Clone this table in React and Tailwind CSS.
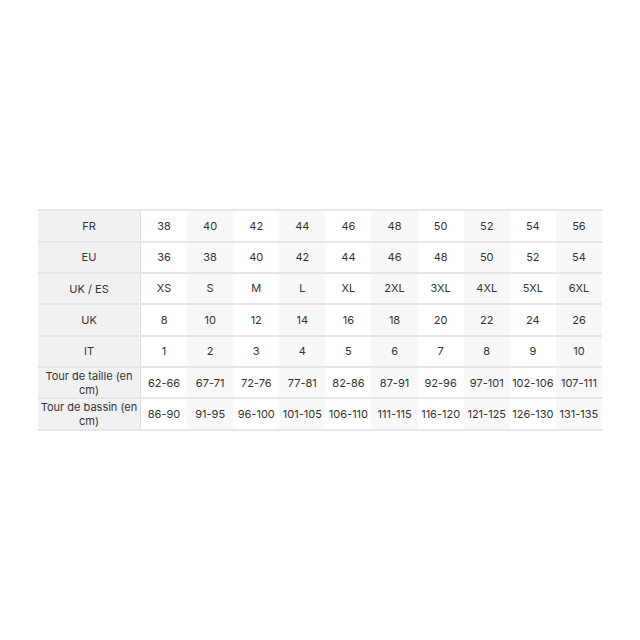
const rows = [
  ['FR', ['38', '40', '42', '44', '46', '48', '50', '52', '54', '56']],
  ['EU', ['36', '38', '40', '42', '44', '46', '48', '50', '52', '54']],
  ['UK / ES', ['XS', 'S', 'M', 'L', 'XL', '2XL', '3XL', '4XL', '5XL', '6XL']],
  ['UK', ['8', '10', '12', '14', '16', '18', '20', '22', '24', '26']],
  ['IT', ['1', '2', '3', '4', '5', '6', '7', '8', '9', '10']],
  ['Tour de taille (en cm)', ['62-66', '67-71', '72-76', '77-81', '82-86', '87-91', '92-96', '97-101', '102-106', '107-111']],
  ['Tour de bassin (en cm)', ['86-90', '91-95', '96-100', '101-105', '106-110', '111-115', '116-120', '121-125', '126-130', '131-135']],
];

export default function App() {
  return (
    <div className="w-[640px] h-[640px] bg-white flex items-center justify-center font-['Inter',sans-serif] text-[11px] text-[#333]">
      <div className="w-[564px] border-t-2 border-[#e6e6e6]">
        {rows.map(([label, cells]) => (
          <div key={label} className="grid grid-cols-[103px_repeat(10,1fr)] h-[31.4px] border-b-2 border-[#e6e6e6]">
            <div className="bg-[#f1f1f1] border-r border-[#dcdcdc] flex items-center justify-center text-center leading-[14px]">
              {label}
            </div>
            {cells.map((c, i) => (
              <div key={i} className={`flex items-center justify-center ${i % 2 === 1 ? 'bg-[#f8f8f8]' : 'bg-white'}`}>
                {c}
              </div>
            ))}
          </div>
        ))}
      </div>
    </div>
  );
}
